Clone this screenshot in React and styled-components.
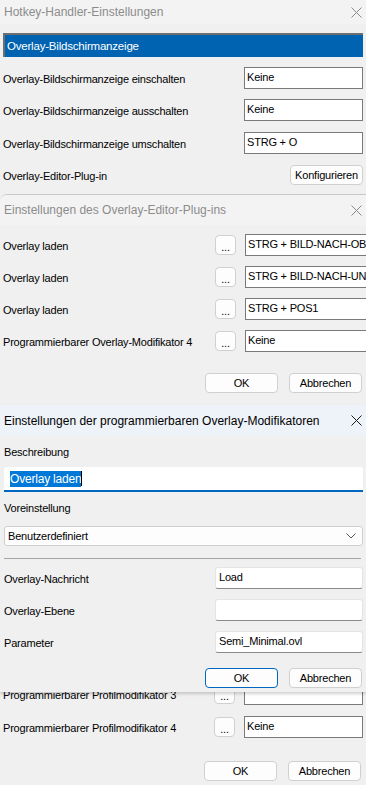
import React from "react";
import styled, { createGlobalStyle } from "styled-components";

const GlobalStyle = createGlobalStyle`
  html, body {
    margin: 0;
    padding: 0;
    background: #f0f0f0;
  }
  body {
    font-family: "Segoe UI", "Liberation Sans", sans-serif;
    font-size: 11px;
    letter-spacing: -0.2px;
    color: #000;
  }
`;

const Close = ({ color }) => (
  <svg width="11" height="11" viewBox="0 0 11 11">
    <path d="M0.5 0.5 L10.5 10.5 M10.5 0.5 L0.5 10.5" stroke={color} strokeWidth="1" />
  </svg>
);

const Chevron = () => (
  <svg width="10" height="6" viewBox="0 0 10 6">
    <path d="M0.5 0.5 L5 5 L9.5 0.5" stroke="#555" strokeWidth="1" fill="none" />
  </svg>
);

const App = () => {
  return (
    <>
      <GlobalStyle />
      <Desktop>
        {/* hotkey handler */}
        <Window $top={0} $height={196}>
          <TitleBar $height={24}>
            <Title>Hotkey-Handler-Einstellungen</Title>
            <Close color="#8a8a8a" />
          </TitleBar>
          <Body $pad="9px 3px 0 3px">
            <Selected>Overlay-Bildschirmanzeige</Selected>
            <Row $mt={10}>
              <Label>Overlay-Bildschirmanzeige einschalten</Label>
              <KeyInput $w={119}>Keine</KeyInput>
            </Row>
            <Row $mt={10}>
              <Label>Overlay-Bildschirmanzeige ausschalten</Label>
              <KeyInput $w={119}>Keine</KeyInput>
            </Row>
            <Row $mt={11}>
              <Label>Overlay-Bildschirmanzeige umschalten</Label>
              <KeyInput $w={119}>STRG + O</KeyInput>
            </Row>
            <Row $mt={10}>
              <Label>Overlay-Editor-Plug-in</Label>
              <Button $w={73}>Konfigurieren</Button>
            </Row>
          </Body>
        </Window>

        {/* overlay editor plug-in */}
        <Window $top={194} $height={210} $edge>
          <TitleBar $height={30}>
            <Title>Einstellungen des Overlay-Editor-Plug-ins</Title>
            <Close color="#8a8a8a" />
          </TitleBar>
          <Body $pad="9px 0 0 3px">
            {[
              ["Overlay laden", "STRG + BILD-NACH-OBEN"],
              ["Overlay laden", "STRG + BILD-NACH-UNTEN"],
              ["Overlay laden", "STRG + POS1"],
              ["Programmierbarer Overlay-Modifikator 4", "Keine"],
            ].map(([label, key], i) => (
              <Row key={i} $mt={i === 0 ? 0 : 10}>
                <Label>{label}</Label>
                <Pair>
                  <Dots>...</Dots>
                  <KeyInput $w={121} $open>{key}</KeyInput>
                </Pair>
              </Row>
            ))}
            <Buttons $mt={21} $pr={4}>
              <Button $w={73}>OK</Button>
              <Button $w={73}>Abbrechen</Button>
            </Buttons>
          </Body>
        </Window>

        {/* profile modifiers, mostly hidden */}
        <Window $top={398} $height={387}>
          <Body $pad="0 3px 4px 3px" $end>
            <ListBar />
            <Row>
              <Label>Programmierbarer Profilmodifikator 3</Label>
              <Pair>
                <Dots>...</Dots>
                <KeyInput $w={119}></KeyInput>
              </Pair>
            </Row>
            <Row $mt={11}>
              <Label>Programmierbarer Profilmodifikator 4</Label>
              <Pair>
                <Dots>...</Dots>
                <KeyInput $w={119}>Keine</KeyInput>
              </Pair>
            </Row>
            <Buttons $mt={23} $pr={2}>
              <Button $w={73}>OK</Button>
              <Button $w={73}>Abbrechen</Button>
            </Buttons>
          </Body>
        </Window>

        {/* programmable overlay modifiers (active) */}
        <Window $top={405} $height={287} $active>
          <TitleBar $height={31} $active>
            <Title $active>Einstellungen der programmierbaren Overlay-Modifikatoren</Title>
            <Close color="#1a1a1a" />
          </TitleBar>
          <Body $pad="0 3px 0 4px">
            <FieldLabel>Beschreibung</FieldLabel>
            <TextField>
              <Selection>Overlay laden</Selection>
              <Caret />
            </TextField>
            <FieldLabel>Voreinstellung</FieldLabel>
            <Select>
              <span>Benutzerdefiniert</span>
              <Chevron />
            </Select>
            <Divider />
            {[
              ["Overlay-Nachricht", "Load"],
              ["Overlay-Ebene", ""],
              ["Parameter", "Semi_Minimal.ovl"],
            ].map(([label, value], i) => (
              <Row key={i} $mt={i === 0 ? 0 : 10}>
                <Label>{label}</Label>
                <FlatInput>{value}</FlatInput>
              </Row>
            ))}
            <Buttons $mt={15} $pr={1}>
              <Button $w={73} $default>OK</Button>
              <Button $w={73}>Abbrechen</Button>
            </Buttons>
          </Body>
        </Window>
      </Desktop>
    </>
  );
};

//styled components
const Desktop = styled.div`
  position: relative;
  width: 366px;
  height: 785px;
  overflow: hidden;
  background: #f0f0f0;
`;
const Window = styled.div`
  position: absolute;
  left: 0;
  top: ${(p) => p.$top}px;
  width: 366px;
  height: ${(p) => p.$height}px;
  box-sizing: border-box;
  display: flex;
  flex-direction: column;
  overflow: hidden;
  background: #f0f0f0;
  border-top: ${(p) => (p.$edge ? "1px solid #c9c9c9" : "none")};
  border-top-left-radius: ${(p) => (p.$edge ? "7px" : "0")};
  box-shadow: ${(p) => (p.$active ? "0 2px 3px rgba(0,0,0,0.18)" : "none")};
`;
const TitleBar = styled.div`
  flex: none;
  height: ${(p) => p.$height}px;
  display: flex;
  align-items: center;
  justify-content: space-between;
  padding: 0 4px 0 4px;
  background: ${(p) => (p.$active ? "#eef3f9" : "#f3f3f3")};
`;
const Title = styled.div`
  font-size: 12px;
  letter-spacing: 0;
  color: ${(p) => (p.$active ? "#000" : "#8c8c8c")};
  white-space: nowrap;
`;
const Body = styled.div`
  flex: 1;
  display: flex;
  flex-direction: column;
  justify-content: ${(p) => (p.$end ? "flex-end" : "flex-start")};
  padding: ${(p) => p.$pad};
`;
const Selected = styled.div`
  height: 24px;
  box-sizing: border-box;
  padding-left: 2px;
  display: flex;
  align-items: center;
  background: #0063b1;
  color: #fff;
  font-size: 11.5px;
  border-top: 2px solid #6e6e6e;
  border-left: 2px solid #6e6e6e;
`;
const Row = styled.div`
  height: 22px;
  flex: none;
  margin-top: ${(p) => p.$mt || 0}px;
  display: flex;
  align-items: center;
  justify-content: space-between;
`;
const Label = styled.span`
  white-space: nowrap;
  padding-top: 1px;
`;
const Pair = styled.div`
  flex: none;
  display: flex;
  align-items: center;
  gap: 9px;
`;
const KeyInput = styled.div`
  flex: none;
  width: ${(p) => p.$w}px;
  height: 22px;
  box-sizing: border-box;
  background: #fff;
  border: 1px solid #7a7a7a;
  border-right: ${(p) => (p.$open ? "none" : "1px solid #7a7a7a")};
  padding: 2px 0 0 2px;
  line-height: 14px;
  white-space: nowrap;
  overflow: hidden;
`;
const Dots = styled.div`
  flex: none;
  width: 21px;
  height: 20px;
  box-sizing: border-box;
  border: 1px solid #d0d0d0;
  border-radius: 4px;
  background: #fdfdfd;
  display: flex;
  align-items: flex-end;
  justify-content: center;
  line-height: 14px;
  font-size: 11px;
`;
const Button = styled.div`
  flex: none;
  width: ${(p) => p.$w}px;
  height: 20px;
  box-sizing: border-box;
  border: 1px solid ${(p) => (p.$default ? "#0067c0" : "#d0d0d0")};
  border-radius: 4px;
  background: #fdfdfd;
  display: flex;
  align-items: center;
  justify-content: center;
`;
const Buttons = styled.div`
  flex: none;
  margin-top: ${(p) => p.$mt}px;
  padding-right: ${(p) => p.$pr}px;
  display: flex;
  justify-content: flex-end;
  gap: 11px;
`;
const ListBar = styled.div`
  flex: none;
  height: 2px;
  margin: 5px 0 0 -3px;
  background: #1e64a6;
`;
const FieldLabel = styled.div`
  height: 16px;
  margin-top: 8px;
  line-height: 16px;
`;
const TextField = styled.div`
  margin-top: 7px;
  height: 25px;
  box-sizing: border-box;
  background: #fff;
  border-radius: 3px 3px 0 0;
  border-bottom: 2px solid #0067c0;
  display: flex;
  align-items: center;
  padding-left: 6px;
  font-size: 12px;
`;
const Selection = styled.span`
  background: #0078d7;
  color: #fff;
  line-height: 16px;
`;
const Caret = styled.span`
  width: 1px;
  height: 15px;
  background: #000;
`;
const Select = styled.div`
  margin-top: 10px;
  height: 20px;
  box-sizing: border-box;
  border: 1px solid #cfcfcf;
  border-radius: 3px;
  background: #fdfdfd;
  display: flex;
  align-items: center;
  justify-content: space-between;
  padding: 0 6px 0 3px;
`;
const Divider = styled.div`
  margin: 12px 2px 8px 0;
  height: 1px;
  background: #a5a5a5;
`;
const FlatInput = styled.div`
  flex: none;
  width: 148px;
  height: 22px;
  box-sizing: border-box;
  background: #fff;
  border: 1px solid #e4e4e4;
  border-bottom: 1px solid #8a8a8a;
  border-radius: 3px;
  padding: 2px 0 0 3px;
  line-height: 15px;
`;

export default App;
